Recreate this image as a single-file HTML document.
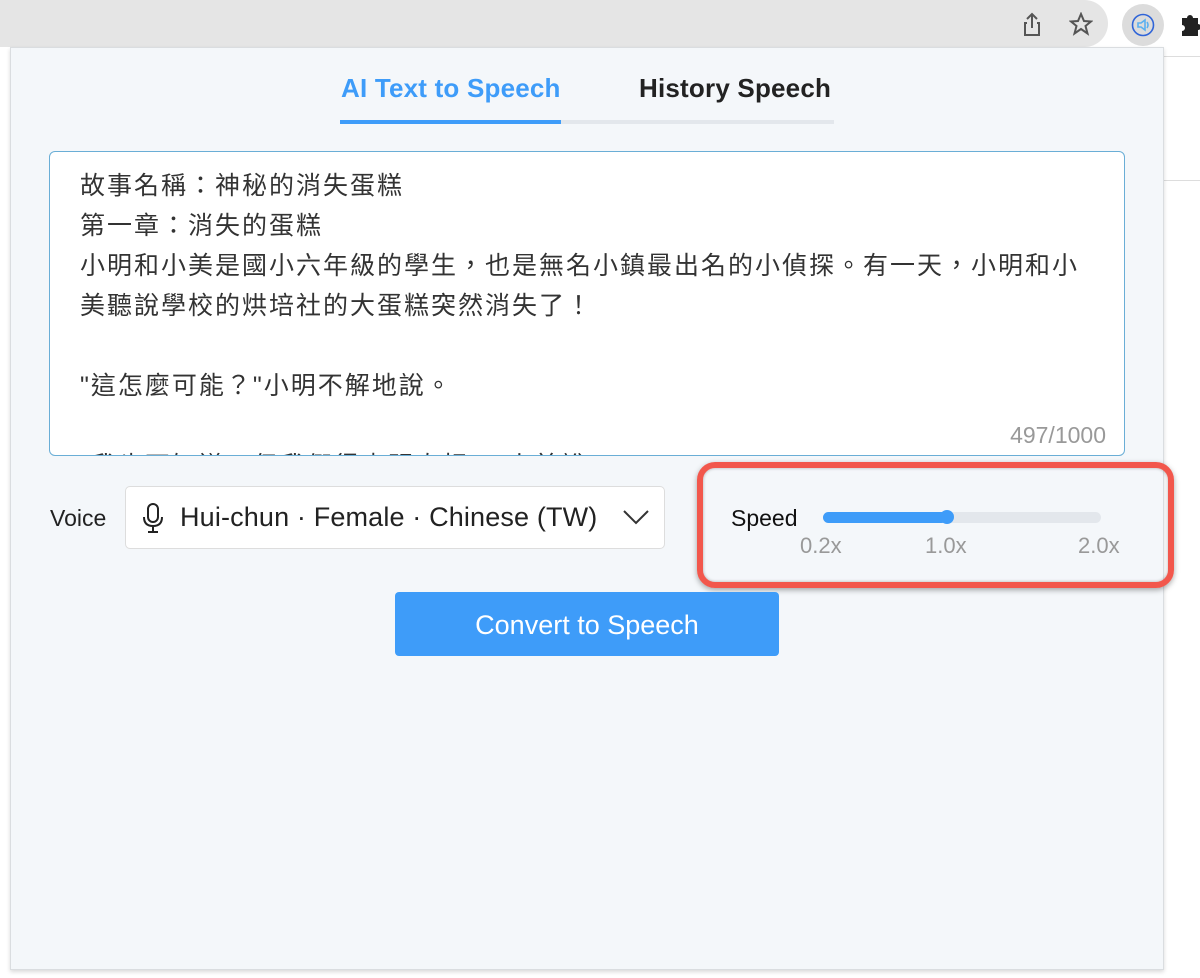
<!DOCTYPE html>
<html><head><meta charset="utf-8"><style>
*{box-sizing:border-box;margin:0;padding:0}
body{width:1200px;height:978px;background:#fff;position:relative;overflow:hidden;font-family:"Liberation Sans","Noto Sans CJK TC",sans-serif}
.topbar{position:absolute;left:0;top:0;width:1108px;height:47px;background:#e5e5e5;border-radius:0 24px 24px 0}
.ext{position:absolute;left:1122px;top:4px;width:42px;height:42px;border-radius:50%;background:#dcdcdc}
.line1{position:absolute;left:1164px;top:56px;width:36px;height:125px;background:#fff;border-top:1px solid #ddd;border-bottom:1px solid #ddd}
.popup{position:absolute;left:10px;top:47px;width:1154px;height:923px;background:#f4f7fa;border:1px solid #dadde0;box-shadow:0 2px 4px rgba(0,0,0,.15)}
.tab{position:absolute;top:73px;font-size:26px;font-weight:bold;letter-spacing:0.2px}
.ta{position:absolute;left:49px;top:151px;width:1076px;height:305px;background:#fff;border:1.5px solid #6aaed6;border-radius:6px;overflow:hidden}
.ta .t{position:absolute;left:30px;top:14px;font-size:25px;letter-spacing:2px;line-height:40px;color:#333;white-space:pre}
.cnt{position:absolute;right:18px;bottom:6px;font-size:23px;color:#999}
.sel{position:absolute;left:125px;top:486px;width:540px;height:63px;background:#fff;border:1px solid #ddd;border-radius:5px}
.btn{position:absolute;left:395px;top:592px;width:384px;height:64px;background:#3e9cf9;border-radius:4px;color:#fff;font-size:27px;text-align:center;line-height:66px}
.red{position:absolute;left:697px;top:462px;width:477px;height:126px;border:6px solid #f2574c;border-radius:18px;box-shadow:0 2px 6px rgba(0,0,0,.35),inset 0 0 3px rgba(0,0,0,.3)}
</style></head><body>
<div class="topbar"></div>
<svg style="position:absolute;left:1020px;top:12px" width="24" height="26" viewBox="0 0 24 26" fill="none" stroke="#555" stroke-width="2"><path d="M12 2v14M7 7l5-5 5 5M7 11H5v12h14V11h-2"/></svg>
<svg style="position:absolute;left:1069px;top:12px" width="24" height="24" viewBox="0 0 24 24" fill="none" stroke="#555" stroke-width="2"><path d="M12 2l3 7 7 .5-5.5 4.5 2 7.5L12 17l-6.5 4.5 2-7.5L2 9.5 9 9z"/></svg>
<div class="ext"></div>
<svg style="position:absolute;left:1131px;top:13px" width="24" height="24" viewBox="0 0 24 24" fill="none" stroke="#3a7bd5" stroke-width="1.6"><circle cx="12" cy="12" r="10.5" stroke="#2f64d8"/><path d="M7 10h3l4-3v10l-4-3H7z" stroke="#5ab0f0"/><path d="M16 9q2 3 0 6" stroke="#5ab0f0"/></svg>
<svg style="position:absolute;left:1180px;top:12px" width="20" height="26" viewBox="0 0 20 26" fill="#222"><path d="M2 6h5a3 3 0 1 1 6 0h5v6a3 3 0 1 1 0 6v6H2v-5a3 3 0 1 0 0-6z"/></svg>
<div class="line1"></div>
<div class="popup"></div>
<div class="tab" style="left:341px;color:#3e9cf9">AI Text to Speech</div>
<div class="tab" style="left:639px;color:#222">History Speech</div>
<div style="position:absolute;left:340px;top:120px;width:494px;height:4px;background:#e3e7ec"></div>
<div style="position:absolute;left:340px;top:120px;width:221px;height:4px;background:#3e9cf9"></div>
<div class="ta"><div class="t">故事名稱：神秘的消失蛋糕
第一章：消失的蛋糕
小明和小美是國小六年級的學生，也是無名小鎮最出名的小偵探。有一天，小明和小
美聽說學校的烘培社的大蛋糕突然消失了！

"這怎麼可能？"小明不解地說。

"我也不知道，但我們得查明真相！"小美說。</div><div class="cnt">497/1000</div></div>
<div style="position:absolute;left:50px;top:505px;font-size:23px;color:#222">Voice</div>
<div class="sel"></div>
<svg style="position:absolute;left:141px;top:502px" width="24" height="32" viewBox="0 0 24 32" fill="none" stroke="#222" stroke-width="2"><rect x="7" y="2" width="10" height="18" rx="5"/><path d="M3 15q0 9 9 9t9-9M12 24v5M7 30h10"/></svg>
<div style="position:absolute;left:180px;top:502px;font-size:27px;letter-spacing:0.15px;color:#222">Hui-chun · Female · Chinese (TW)</div>
<svg style="position:absolute;left:622px;top:508px" width="28" height="18" viewBox="0 0 28 18" fill="none" stroke="#333" stroke-width="2"><path d="M2 3l12 12 12-12"/></svg>
<div style="position:absolute;left:731px;top:505px;font-size:23px;color:#111">Speed</div>
<div style="position:absolute;left:823px;top:512px;width:278px;height:11px;border-radius:6px;background:#e3e7ec"></div>
<div style="position:absolute;left:823px;top:512px;width:124px;height:11px;border-radius:6px;background:#3e9cf9"></div>
<div style="position:absolute;left:940px;top:510px;width:14px;height:14px;border-radius:50%;background:#3e9cf9"></div>
<div style="position:absolute;left:800px;top:533px;font-size:22px;color:#999">0.2x</div>
<div style="position:absolute;left:925px;top:533px;font-size:22px;color:#999">1.0x</div>
<div style="position:absolute;left:1078px;top:533px;font-size:22px;color:#999">2.0x</div>
<div class="red"></div>
<div class="btn">Convert to Speech</div>
</body></html>
